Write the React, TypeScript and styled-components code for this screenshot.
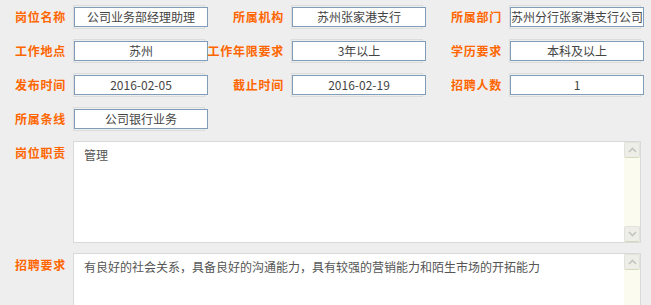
import styled, { createGlobalStyle } from 'styled-components';

const GlobalStyle = createGlobalStyle`
  html, body {
    margin: 0;
    padding: 0;
    overflow: hidden;
    background: #eeeeee;
    font-family: "Noto Sans CJK SC", "Liberation Sans", sans-serif;
  }
`;

const fields = [
  ['岗位名称', '公司业务部经理助理'],
  ['所属机构', '苏州张家港支行'],
  ['所属部门', '苏州分行张家港支行公司'],
  ['工作地点', '苏州'],
  ['工作年限要求', '3年以上'],
  ['学历要求', '本科及以上'],
  ['发布时间', '2016-02-05'],
  ['截止时间', '2016-02-19'],
  ['招聘人数', '1'],
  ['所属条线', '公司银行业务'],
];

const areas = [
  ['岗位职责', '管理'],
  ['招聘要求', '有良好的社会关系，具备良好的沟通能力，具有较强的营销能力和陌生市场的开拓能力'],
];

function ChevronUp() {
  return (
    <svg width="9" height="6" viewBox="0 0 9 6">
      <path d="M1 5 L4.5 1.5 L8 5" fill="none" stroke="#c4c4bc" strokeWidth="1.6" />
    </svg>
  );
}

function ChevronDown() {
  return (
    <svg width="9" height="6" viewBox="0 0 9 6">
      <path d="M1 1 L4.5 4.5 L8 1" fill="none" stroke="#c4c4bc" strokeWidth="1.6" />
    </svg>
  );
}

function App() {
  return (
    <Page>
      <GlobalStyle />
      <Grid>
        {fields.map(([label, value]) => (
          <Cell key={label}>
            <Label>
              <span>{label}</span>
            </Label>
            <Frame>
              <Input>{value}</Input>
            </Frame>
          </Cell>
        ))}
      </Grid>
      {areas.map(([label, value], i) => (
        <AreaRow key={label}>
          <Label $top>
            <span>{label}</span>
          </Label>
          <TextBox>
            <TextBody>{value}</TextBody>
            <Scrollbar>
              <ScrollButton>
                <ChevronUp />
              </ScrollButton>
              {i === 0 && (
                <ScrollButton>
                  <ChevronDown />
                </ScrollButton>
              )}
            </Scrollbar>
          </TextBox>
        </AreaRow>
      ))}
    </Page>
  );
}

const Page = styled.div`
  box-sizing: border-box;
  height: 100vh;
  overflow: hidden;
  padding-top: 5px;
  display: flex;
  flex-direction: column;
  gap: 10px;
`;

const Grid = styled.div`
  display: grid;
  grid-template-columns: repeat(3, 218px);
  row-gap: 10px;
`;

const Cell = styled.div`
  display: flex;
  align-items: center;
`;

const Label = styled.div<{ $top?: boolean }>`
  width: 66px;
  flex-shrink: 0;
  margin-right: 7px;
  display: flex;
  justify-content: flex-end;
  align-self: ${(p) => (p.$top ? 'flex-start' : 'center')};
  padding-top: ${(p) => (p.$top ? '5px' : '0')};
  white-space: nowrap;
  color: #ff6600;
  font-size: 12px;
  font-weight: bold;
  letter-spacing: 0.75px;
  line-height: 14px;
`;

const Frame = styled.div`
  width: 130px;
  height: 22px;
  border: 1px solid #dcdcdc;
  overflow: visible;
`;

const Input = styled.div`
  box-sizing: border-box;
  width: 134px;
  height: 20px;
  margin-top: 1px;
  border: 1px solid #7f9db9;
  background: #ffffff;
  color: #444444;
  font-size: 12px;
  line-height: 18px;
  text-align: center;
  white-space: nowrap;
  overflow: hidden;
`;

const AreaRow = styled.div`
  display: flex;
  flex-shrink: 0;
`;

const TextBox = styled.div`
  box-sizing: border-box;
  width: 568px;
  height: 102px;
  border: 1px solid #d9d9d9;
  background: #ffffff;
  display: flex;
`;

const TextBody = styled.div`
  flex: 1;
  padding: 5px 10px;
  color: #555555;
  font-size: 12px;
  line-height: 16px;
`;

const Scrollbar = styled.div`
  width: 16px;
  background: #fbfbef;
  display: flex;
  flex-direction: column;
  justify-content: space-between;
`;

const ScrollButton = styled.div`
  box-sizing: border-box;
  width: 16px;
  height: 16px;
  background: #eeeee8;
  border: 1px solid #e2e2da;
  border-bottom-color: #d5d9bd;
  border-radius: 2px;
  display: flex;
  align-items: center;
  justify-content: center;
`;

export default App;
